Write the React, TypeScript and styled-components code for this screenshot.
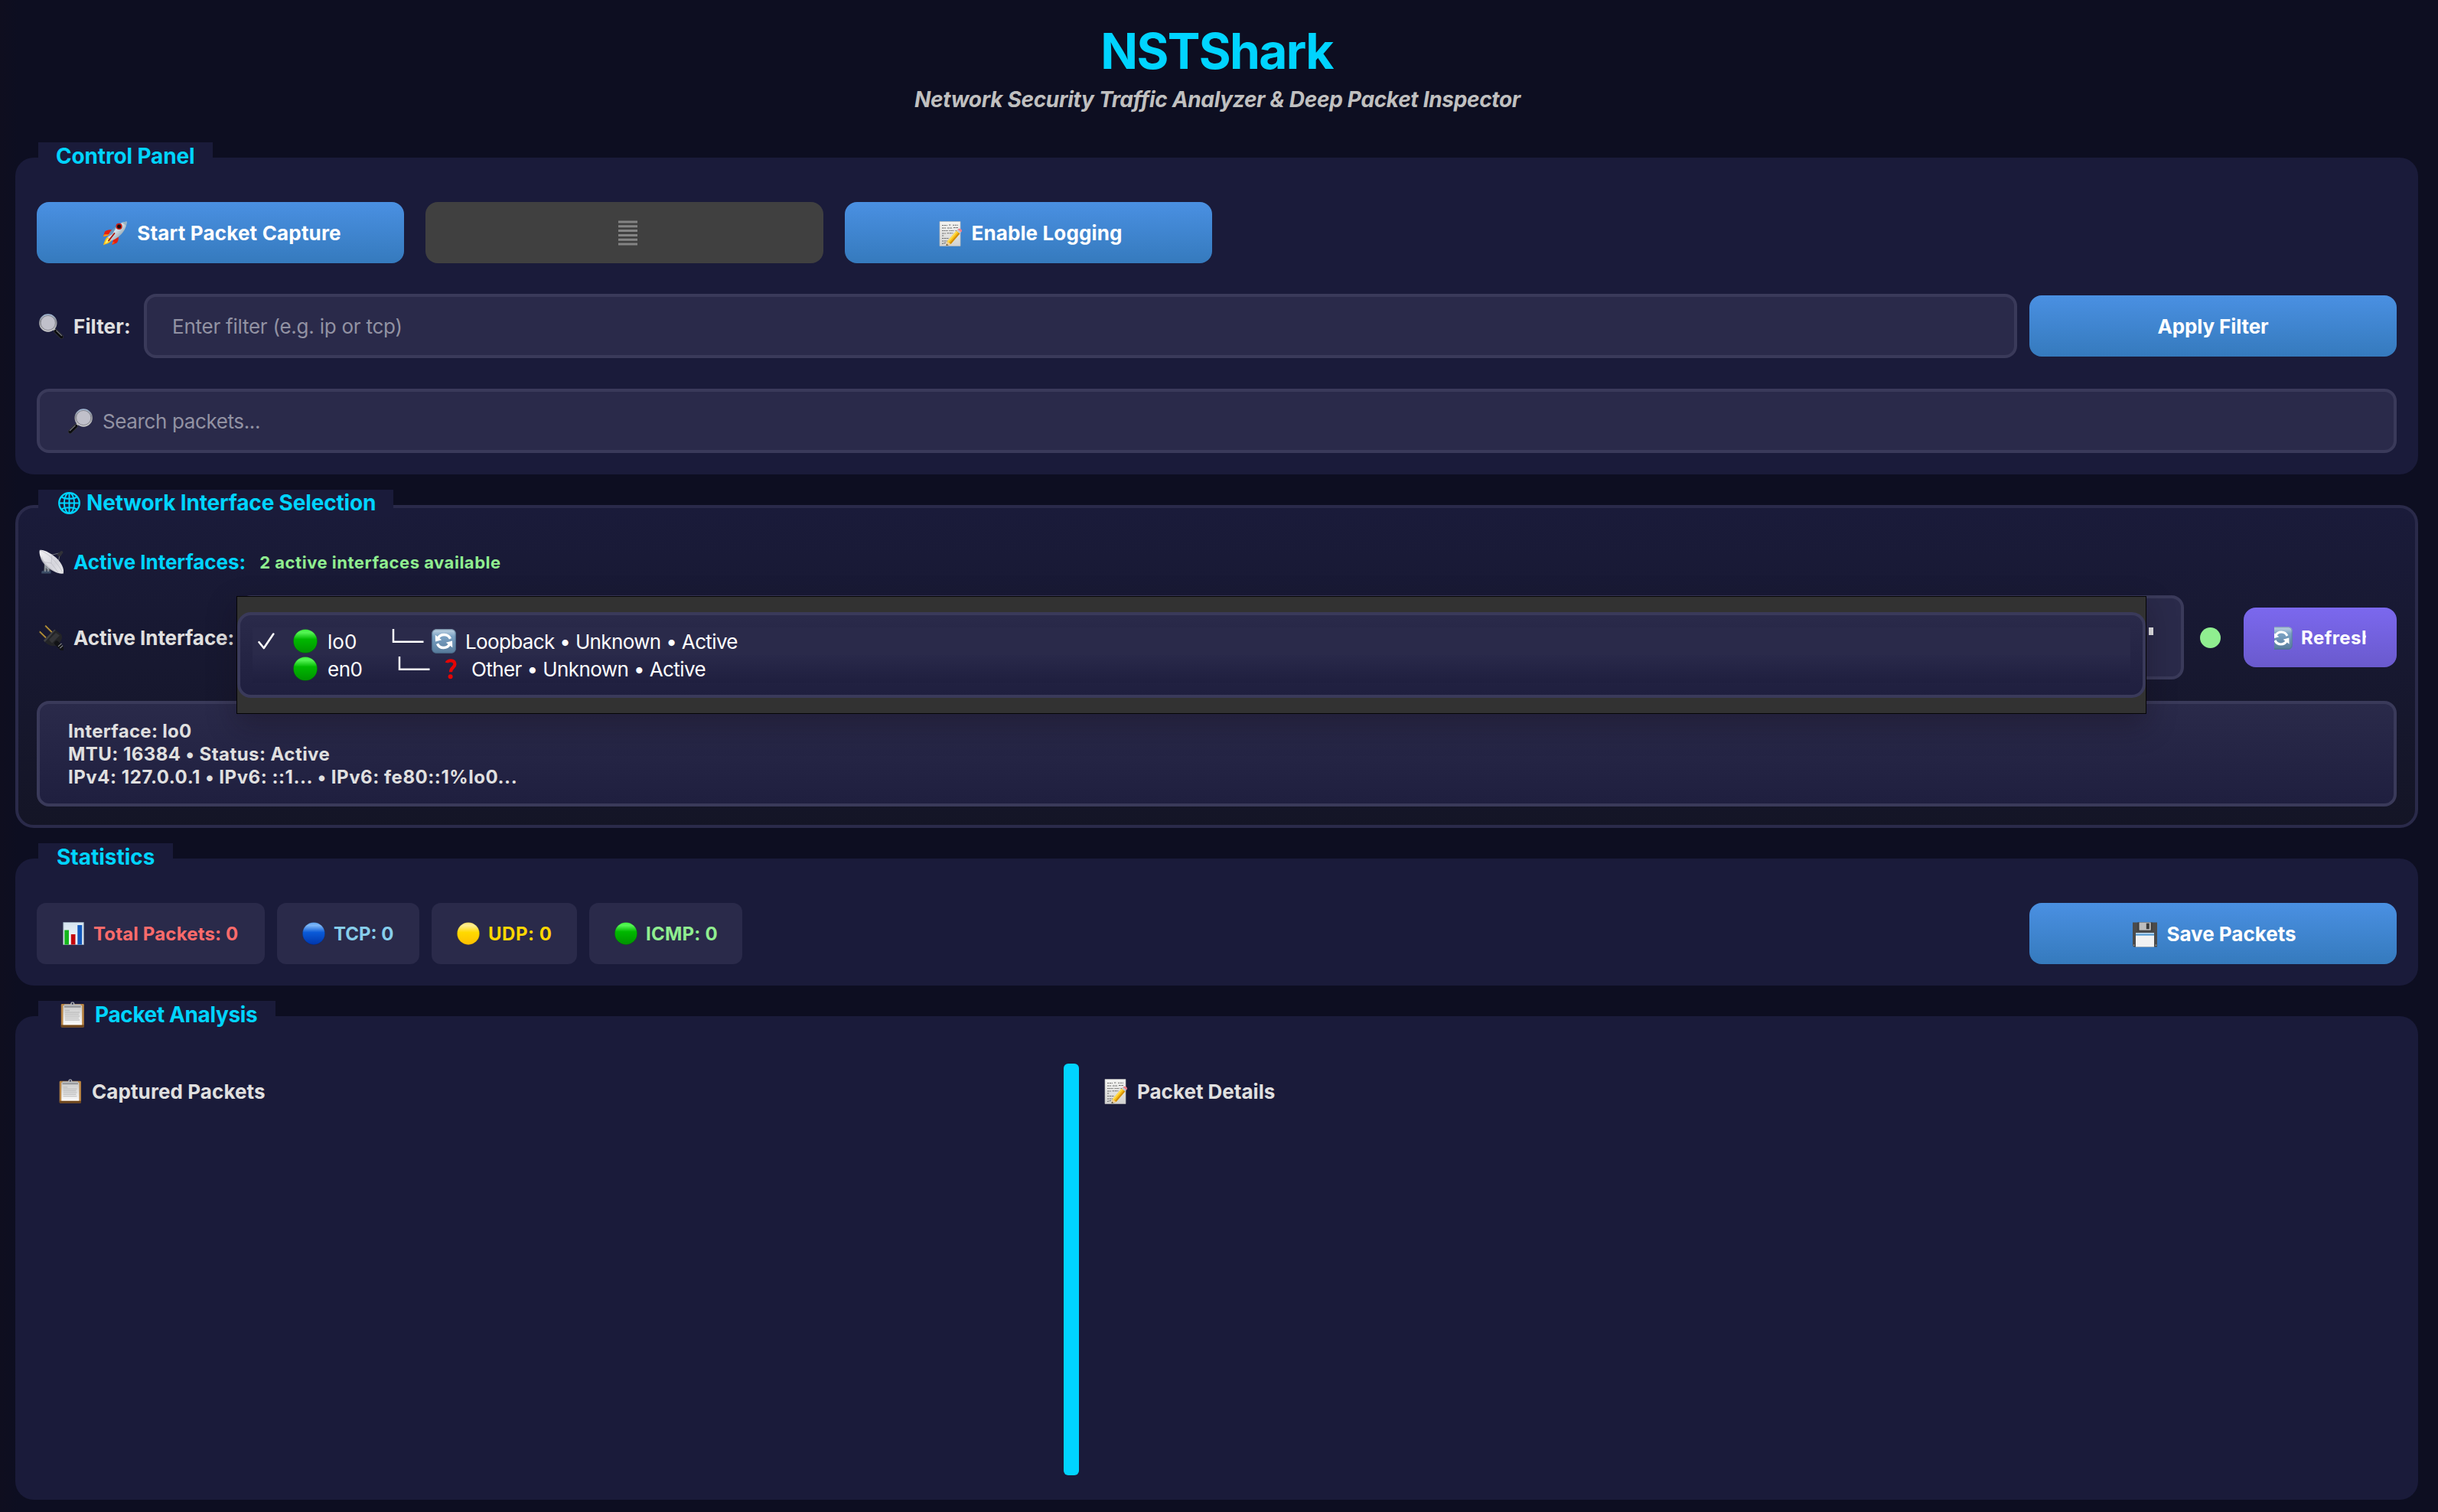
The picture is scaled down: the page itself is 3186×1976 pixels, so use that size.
import React from 'react';
import styled, { createGlobalStyle } from 'styled-components';

const color = {
  page: '#0d0e21',
  panel: '#1a1b3a',
  field: '#2a2a4a',
  line: '#3a3a5a',
  accent: '#00d4ff',
  text: '#e0e0e0',
  muted: '#9292a3',
  ok: '#90ee90',
};

const GlobalStyle = createGlobalStyle`
  *, *::before, *::after { box-sizing: border-box; }
  html, body { margin: 0; background: ${color.page}; }
  body { font-family: Inter, "Open Sans", sans-serif; color: ${color.text}; }
  svg { display: block; flex: none; }
`;

const Page = styled.main`
  width: 3186px;
  height: 1976px;
  padding: 0 26px 16px 20px;
  display: flex;
  flex-direction: column;
  gap: 40px;
  overflow: hidden;
  background: linear-gradient(90deg, #0f0e1f 0, ${color.page} 24px);
`;

const Header = styled.header`
  height: 166px;
  padding-top: 32px;
  display: flex;
  flex-direction: column;
  align-items: center;
`;

const Title = styled.h1`
  margin: 0;
  font-size: 64px;
  line-height: 70px;
  font-weight: 700;
  letter-spacing: -1.62px;
  color: ${color.accent};
`;

const Subtitle = styled.p`
  margin: 12px 0 0 2px;
  font-size: 28px;
  line-height: 32px;
  font-weight: 700;
  font-style: italic;
  letter-spacing: -0.32px;
  color: #c0c0c0;
`;

const Panel = styled.section<{ $outlined?: boolean; $grow?: boolean }>`
  display: flex;
  flex-direction: column;
  border-radius: 24px;
  flex: ${p => (p.$grow ? '1 1 0' : 'none')};
  padding: ${p => (p.$outlined ? '0 24px 24px' : p.$grow ? '0 28px 32px' : '0 28px 28px')};
  border: ${p => (p.$outlined ? '4px solid #2a2a4a' : 'none')};
  background: ${p => (p.$outlined ? 'linear-gradient(180deg, #1a1b3a, #141526)' : color.panel)};
  background-origin: border-box;
`;

const PanelTab = styled.h2<{ $width: number; $lift?: number; $inset?: number; $gap?: number; $track?: number }>`
  margin: -${p => p.$lift ?? 20}px 0 0 2px;
  width: ${p => p.$width}px;
  height: 36px;
  padding-left: ${p => p.$inset ?? 24}px;
  padding-bottom: ${p => (p.$gap === 8 ? 2 : 0)}px;
  display: flex;
  align-items: center;
  gap: ${p => p.$gap ?? 0}px;
  background: ${color.panel};
  color: ${color.accent};
  font-size: 28px;
  line-height: 32px;
  font-weight: 700;
  letter-spacing: ${p => p.$track ?? 0}px;
  white-space: nowrap;
`;

const PanelBody = styled.div<{ $gap: number; $top?: number }>`
  display: flex;
  flex-direction: column;
  flex: 1;
  margin-top: ${p => p.$top ?? 42}px;
  gap: ${p => p.$gap}px;
`;

const Row = styled.div<{ $gap?: number }>`
  display: flex;
  align-items: center;
  gap: ${p => p.$gap ?? 0}px;
`;

const Text = styled.span<{ $track?: number; $size?: number; $color?: string; $weight?: number }>`
  padding-top: 2px;
  font-size: ${p => p.$size ?? 26}px;
  line-height: 32px;
  font-weight: ${p => p.$weight ?? 700};
  letter-spacing: ${p => p.$track ?? 0}px;
  color: ${p => p.$color ?? color.text};
  white-space: nowrap;
`;

const Button = styled.button<{ $width?: number; $nudge?: number; $gap?: number; $track?: number }>`
  width: ${p => p.$width ?? 480}px;
  height: 80px;
  flex: none;
  display: flex;
  align-items: center;
  justify-content: center;
  gap: ${p => p.$gap ?? 12}px;
  padding: 2px 0 0 ${p => p.$nudge ?? 0}px;
  border: 0;
  border-radius: 16px;
  color: #fff;
  font: 700 26px/32px Inter, sans-serif;
  letter-spacing: ${p => p.$track ?? 0}px;
  background: linear-gradient(180deg, #4a90e2, #357abd);
  &:disabled {
    padding-top: 0;
    color: #808080;
    background: #404040;
  }
`;

const RefreshButton = styled(Button)`
  height: 78px;
  margin-left: 30px;
  padding: 1px 40px 0;
  background: linear-gradient(180deg, #7b68ee, #6a5acd);
`;

const Clip = styled.span`
  display: flex;
  justify-content: flex-start;
  align-items: center;
  gap: 11px;
  width: 120px;
  overflow: hidden;
  font-size: 24px;
  letter-spacing: 0.44px;
  & > svg { margin-left: -6px; }
`;

const FilterGroup = styled(Row)`
  flex: 1;
`;

const FieldLabel = styled.label`
  width: 140px;
  padding-left: 3px;
  display: flex;
  align-items: center;
  gap: 13px;
`;

const Field = styled.div<{ $inset: number }>`
  flex: 1;
  height: 84px;
  min-height: 84px;
  padding-left: ${p => p.$inset}px;
  display: flex;
  align-items: center;
  gap: 13px;
  border: 4px solid ${color.line};
  border-radius: 16px;
  background: ${color.field};
`;

const Input = styled.input<{ $track: number }>`
  flex: 1;
  height: 40px;
  padding: 1px 0 0;
  border: 0;
  outline: 0;
  background: transparent;
  color: ${color.text};
  font: 400 26px/32px Inter, sans-serif;
  letter-spacing: ${p => p.$track}px;
  &::placeholder { color: ${color.muted}; opacity: 1; }
`;

const InterfaceHeading = styled(Row)`
  height: 32px;
  padding-left: 3px;
  gap: 13px;
  & > :last-child { margin-left: 5px; }
`;

const InterfaceRow = styled(Row)`
  height: 110px;
  padding-left: 3px;
`;

const InterfaceName = styled.label`
  width: 261px;
  display: flex;
  align-items: center;
  gap: 13px;
`;

const Select = styled.div`
  position: relative;
  width: 2542px;
  height: 110px;
  flex: none;
  display: flex;
  justify-content: flex-end;
  align-items: flex-start;
  padding: 38px 36px 0 0;
  border: 4px solid ${color.line};
  border-radius: 16px;
  background: ${color.field};
`;

const SelectMark = styled.i`
  width: 6px;
  height: 10px;
  background: #e8e8ea;
`;

const Popup = styled.div`
  position: absolute;
  left: -7px;
  top: -3px;
  width: 2496px;
  height: 154px;
  padding: 20px 0;
  border: 1px solid #050505;
  background: #323232;
  box-shadow: 0 14px 34px rgba(20, 12, 24, 0.35);
`;

const PopupFrame = styled.div`
  height: 112px;
  padding: 16px;
  border: 4px solid ${color.line};
  border-radius: 18px;
  background: linear-gradient(180deg, #2a2a4a, #1f1f3f);
`;

const Option = styled.div<{ $last?: boolean }>`
  height: 36px;
  display: flex;
  align-items: center;
  background: ${p => (p.$last ? 'linear-gradient(180deg, #29294a, #1f1f3f)' : '#2a2a4a')};
`;

const CheckSlot = styled.span`
  width: 53px;
  padding-left: 7px;
`;

const OptionName = styled.span<{ $width: number }>`
  width: ${p => p.$width}px;
  margin-left: 13px;
  display: flex;
`;

const OptionDetail = styled.span`
  display: flex;
  align-items: center;
  & > :nth-child(2) { margin: 0 12px 0 10px; }
`;

const StatusDot = styled.i`
  width: 27px;
  height: 27px;
  margin-left: 21px;
  border-radius: 50%;
  background: ${color.ok};
`;

const DetailsBox = styled.div`
  height: 138px;
  display: flex;
  flex-direction: column;
  justify-content: center;
  padding: 1px 0 0 37px;
  border: 4px solid ${color.line};
  border-radius: 16px;
  background: linear-gradient(180deg, #2a2a4a, #1f1f3f);
  & > span {
    padding-top: 0;
    line-height: 30px;
  }
`;

const StatsRow = styled(Row)`
  justify-content: space-between;
`;

const Chip = styled.div<{ $width: number }>`
  width: ${p => p.$width}px;
  height: 80px;
  padding-left: 33px;
  display: flex;
  align-items: center;
  gap: 11px;
  border-radius: 12px;
  background: ${color.field};
`;

const Split = styled.div`
  flex: 1;
  display: flex;
`;

const Pane = styled.div<{ $width?: number; $inset: number; $gap: number }>`
  ${p => (p.$width ? `width: ${p.$width}px;` : 'flex: 1;')}
  padding: 20px 0 0 ${p => p.$inset}px;
  display: flex;
  align-items: flex-start;
  gap: ${p => p.$gap}px;
  & > span { padding-top: 1px; }
`;

const Splitter = styled.div`
  width: 20px;
  border-radius: 6px;
  background: ${color.accent};
`;

const HiddenDefs = styled.svg`
  position: absolute;
`;

/* Gradients shared by the pictograms. */
const Defs = () => (
  <HiddenDefs width="0" height="0">
    <defs>
      <linearGradient id="ballGreen" x1="0" y1="0" x2="0" y2="1">
        <stop offset="0" stopColor="#3ff03f" /><stop offset=".14" stopColor="#55f555" /><stop offset=".42" stopColor="#00b800" /><stop offset="1" stopColor="#009200" />
      </linearGradient>
      <linearGradient id="ballBlue" x1="0" y1="0" x2="0" y2="1">
        <stop offset="0" stopColor="#5fa4f2" /><stop offset=".14" stopColor="#7db6f7" /><stop offset=".45" stopColor="#0a5ad8" /><stop offset="1" stopColor="#0036ac" />
      </linearGradient>
      <linearGradient id="ballYellow" x1="0" y1="0" x2="0" y2="1">
        <stop offset="0" stopColor="#ffe36a" /><stop offset=".14" stopColor="#ffee93" /><stop offset=".45" stopColor="#ffd900" /><stop offset="1" stopColor="#fdbf00" />
      </linearGradient>
      <linearGradient id="tile" x1="0" y1="0" x2="0" y2="1">
        <stop offset="0" stopColor="#c3d7e6" /><stop offset=".16" stopColor="#9dbad3" /><stop offset=".3" stopColor="#7ba2c4" /><stop offset="1" stopColor="#577b9b" />
      </linearGradient>
      <linearGradient id="paper" x1="0" y1="0" x2="0" y2="1">
        <stop offset="0" stopColor="#f4f4f2" /><stop offset="1" stopColor="#d2d2d0" />
      </linearGradient>
      <linearGradient id="sheet" x1="0" y1="0" x2="0" y2="1">
        <stop offset="0" stopColor="#c9c9c9" /><stop offset="1" stopColor="#fafafa" />
      </linearGradient>
      <linearGradient id="hull" x1="0" y1="0" x2="1" y2="1">
        <stop offset="0" stopColor="#2f7cc0" /><stop offset=".45" stopColor="#d6e3ea" /><stop offset="1" stopColor="#5b7384" />
      </linearGradient>
      <linearGradient id="dish" x1="0" y1="0" x2="1" y2="1">
        <stop offset="0" stopColor="#f2f2f5" /><stop offset=".6" stopColor="#d5d5dc" /><stop offset="1" stopColor="#e9e9ec" />
      </linearGradient>
      <linearGradient id="rim" x1="0" y1="0" x2="0" y2="1">
        <stop offset="0" stopColor="#a3b9d4" /><stop offset=".4" stopColor="#8b8d93" /><stop offset="1" stopColor="#cfcfcf" />
      </linearGradient>
      <linearGradient id="chartBg" x1="0" y1="0" x2="0" y2="1">
        <stop offset="0" stopColor="#d5e4f0" /><stop offset="1" stopColor="#f6f9fb" />
      </linearGradient>
    </defs>
  </HiddenDefs>
);

const Rocket = () => (
  <svg width="32" height="32" viewBox="0 0 32 32">
    <path d="M12 11.5C8.500 10.800 4.500 12.200 3 13.500L0.800 20.300 9 18.500z" fill="#e5200f" />
    <path d="M2 17.500L0.800 20.300 7 19 9.500 17.200z" fill="#ff9b17" />
    <path d="M20.500 19.500C21.500 23 20 27 18.500 28.500L12.500 31 14 24z" fill="#e5200f" />
    <path d="M16 28l-3.500 3 0.800-4z" fill="#f9591b" />
    <path d="M6.500 20.500C3.800 22.500 2 27.500 1 31.200 4.500 30.300 9.500 28.600 11.500 25.500z" fill="#ffbd1a" />
    <path d="M6.800 22.500C5 24 4 27 3.200 29.500 6 28.300 8.500 27 9.600 25.200z" fill="#fff36a" />
    <path d="M6.500 20.800C10 12.500 18 2.500 31.600 0.600 31.500 13 21 22.500 11.300 25.800z" fill="url(#hull)" />
    <path d="M6.500 20.800C10 13 15 7 20 4L13 17z" fill="#2d6ea8" opacity=".6" />
    <path d="M25.500 2.200C27.500 1.200 29.500 0.800 31.600 0.600 31.500 2.800 31.200 4.800 30.500 6.800 29.500 4.500 27.500 2.800 25.500 2.200z" fill="#9db3bf" />
    <circle cx="21.600" cy="6.900" r="4.100" fill="#c81d14" />
    <circle cx="21.600" cy="6.900" r="2.500" fill="#160d14" />
    <path d="M8 25.500L15.500 16" stroke="#a8140c" strokeWidth="1.800" strokeLinecap="round" />
  </svg>
);

const Memo = () => (
  <svg width="32" height="33" viewBox="0 0 32 33">
    <path d="M1 0.500h27v32H1z" fill="url(#paper)" stroke="#b9b9b9" strokeWidth=".7" />
    <g stroke="#6d6d6d" strokeWidth="1.100" fill="none">
      <path d="M4 5.500h7m2-.500h3m2 .300h7" strokeDasharray="2.200 .7" />
      <path d="M4 9h5m2 0h6m2-.500h6" strokeDasharray="2.600 .7" />
      <path d="M4 12.500h8m1.500 0h6m2 0h3" strokeDasharray="1.800 .6" />
      <path d="M4 16h5m1.500-.300h8" strokeDasharray="2.800 .6" />
      <path d="M4 19h2.500M4 22.500h9M4 26h7M4 29.500l5-1.200" strokeDasharray="2.200 .6" />
    </g>
    <path d="M10.800 28.500L9.600 32 13.600 30.900z" fill="#333" />
    <path d="M23 12.500L27.400 16.300 15.500 30 9.600 32 10.800 26.500z" fill="#f7bd16" />
    <path d="M23 12.500L24.400 13.700 12.300 27.800 10.800 26.500z" fill="#ffdc50" />
    <path d="M26 15.100L27.400 16.300 15.500 30 14 28.800z" fill="#d18c08" />
    <path d="M10.800 26.500L15.500 30 9.600 32z" fill="#f0cf98" />
    <path d="M9.600 32l.5-2.200 1.700 1.400z" fill="#2b2b2b" />
    <path d="M23 12.500L24.500 10.800 28.900 14.600 27.400 16.300z" fill="#c3c8cc" />
    <path d="M24.500 10.800C26 9.300 28.200 9.800 29.300 10.900 30.400 12 30.400 13.300 28.900 14.600z" fill="#f0808a" />
  </svg>
);

const Magnifier = ({ mirrored }: { mirrored?: boolean }) => (
  <svg width="32" height="33" viewBox="0 0 32 33">
    <g transform={mirrored ? 'translate(32 0) scale(-1 1)' : undefined}>
      <path d="M19 19.500L23 23.500" stroke="#c9c9c9" strokeWidth="2.800" />
      <path d="M22 23L29.300 30.200" stroke="#3b3d42" strokeWidth="5.400" strokeLinecap="round" />
      <path d="M22 23L29.300 30.200" stroke="#0c0d0f" strokeWidth="4.200" strokeLinecap="round" />
      <path d="M22.800 22.200L29.500 28.700" stroke="#7d7f86" strokeWidth="1.100" strokeLinecap="round" />
      <circle cx="11.800" cy="12" r="10.900" fill="#c0c0ca" stroke="url(#rim)" strokeWidth="1.700" />
      <circle cx="11.800" cy="12" r="9.600" fill="none" stroke="#5f6068" strokeWidth=".8" opacity=".75" />
    </g>
  </svg>
);

const Satellite = () => (
  <svg width="32" height="32" viewBox="0 0 32 32">
    <path d="M7 18l7 6 1 6H6z" fill="#55585f" />
    <path d="M3.500 28.500C5 27 13.500 27 15.500 28.500V31.500H3.200z" fill="#3c4d66" />
    <path d="M8 17v12M12 21v8M8 22l5 5" stroke="#98a0a8" strokeWidth="1.400" />
    <path d="M13 8L26 5M24 22L27.500 5" stroke="#6f7178" strokeWidth="1" />
    <path d="M23.500 6.500L28.500 2.200C30 1.500 31.500 2.500 31.300 4.200L28 9.300C26 9.500 24 8.500 23.500 6.500z" fill="#303138" />
    <path d="M0.800 1.200C4-1 17 5 25 13.500 31 20 33 27 31.800 31.500 26 32.500 17 28.500 10 22 3 15.500-.5 6 .8 1.200z" fill="url(#dish)" />
    <path d="M0.800 1.200C8 3 21 12 31.800 31.500M17 7.500L16 18M6 16.500L16 18 25 30" stroke="#b3b3bc" strokeWidth=".6" fill="none" />
    <path d="M3.500 9C7 19 17 28 29 31.800 18 30 6 22 2 12z" fill="#b1b1ba" opacity=".55" />
  </svg>
);

const Plug = () => (
  <svg width="32" height="33" viewBox="0 0 32 33">
    <path d="M0.800 8.500L9 16.500M8.200 0.800L17 9.500" stroke="#8a6c24" strokeWidth="2.200" />
    <path d="M0.800 8.200L9 16.200M8.400 0.700L17 9.200" stroke="#d8b252" strokeWidth=".9" />
    <path d="M20.300 5.600L22.500 7.500 7.800 22.300 5.800 20z" fill="#3f4043" />
    <path d="M21.500 6.500L29 12C31 15 29.800 19 27.500 22L22 27C17.500 27.800 12.500 27 7.800 22.300z" fill="#232427" />
    <path d="M13 19l9-9 5 3.500-10 10z" fill="#3d3f42" opacity=".7" />
    <path d="M23 23.500L30.500 31" stroke="#121316" strokeWidth="6" strokeLinecap="round" />
    <path d="M25 27.800l4.500-4M27.300 30.200l3.800-3.600" stroke="#8b8d92" strokeWidth="1.100" />
  </svg>
);

const Ball = ({ fill, size = 30 }: { fill: string; size?: number }) => (
  <svg width={size} height={size} viewBox="0 0 32 32">
    <circle cx="16" cy="16" r="15.600" fill={`url(#${fill})`} stroke="#000" strokeOpacity=".2" strokeWidth=".7" />
  </svg>
);

const Cycle = ({ size = 32 }: { size?: number }) => (
  <svg width={size} height={size} viewBox="0 0 32 32">
    <rect x=".3" y=".3" width="31.400" height="31.400" rx="5.500" fill="url(#tile)" />
    <rect x=".9" y=".9" width="30.200" height="30.200" rx="5" fill="none" stroke="#466985" strokeWidth="1" opacity=".6" />
    <g fill="none" stroke="#fff" strokeWidth="3.400">
      <path d="M8.200 12.500A9 9 0 0 1 24.500 12.800" />
      <path d="M23.800 19.500A9 9 0 0 1 7.500 19.200" />
    </g>
    <path d="M4.800 7.800L5 16.500 13.200 14.200z M27.300 24.200L27 15.500 18.800 17.800z" fill="#fff" />
  </svg>
);

const Question = () => (
  <svg width="32" height="32" viewBox="0 0 32 32">
    <path d="M11.800 8.200C12.500 4.500 22.200 3.900 22.400 10 22.500 14.300 17.200 14 17 20.200" fill="none" stroke="#e60505" strokeWidth="4.200" />
    <circle cx="16.600" cy="26.300" r="3" fill="#e60505" />
  </svg>
);

const Globe = () => (
  <svg width="29" height="29" viewBox="0 0 29 29" fill="none" stroke={color.accent} strokeWidth="2">
    <circle cx="14.500" cy="14.500" r="13.300" strokeWidth="2.300" />
    <ellipse cx="14.500" cy="14.500" rx="6.600" ry="13.300" />
    <path d="M14.500 1v27M1 14.500h27M4 6.300C9.500 9.600 19.500 9.600 25 6.300M4 22.700C9.500 19.400 19.500 19.400 25 22.700" />
  </svg>
);

const Chart = () => (
  <svg width="30" height="30" viewBox="0 0 30 30">
    <path d="M1.800 .4h26.500v29.200H1.800z" fill="url(#chartBg)" stroke="#93a5b6" strokeWidth=".9" />
    <path d="M3.300 10.500h5.700v19H3.300z" fill="#14b51c" />
    <path d="M11.800 16h5.700v13.500h-5.700z" fill="#c3070c" />
    <path d="M20.300 4h5.900v25.500h-5.900z" fill="#1259bd" />
  </svg>
);

const Clipboard = ({ size = 32 }: { size?: number }) => (
  <svg width={size} height={size} viewBox="0 0 32 34">
    <rect x=".8" y="3" width="30" height="30.500" rx="1.200" fill="#b98544" />
    <path d="M.8 30.500h30v2.200q0 .8-.8.8H1.600q-.8 0-.8-.8z" fill="#6e461c" />
    <path d="M3.500 5h24.600v25.400H3.500z" fill="url(#sheet)" />
    <path d="M6 11.500h6M6 14h19M6 16.500h18M6 19h19M6 21.500h18M6 24h19" stroke="#b5b5b5" strokeWidth="1.400" opacity=".7" />
    <path d="M5 3.500h8C13.500 1 14 .5 15.800 .5S18 1 18.600 3.500h8v4H5z" fill="#b4b6b9" />
    <path d="M5 6.200h21.600v1.300H5z" fill="#85878b" />
    <circle cx="15.800" cy="2.600" r="1.100" fill={color.panel} />
  </svg>
);

const Floppy = () => (
  <svg width="32" height="33" viewBox="0 0 32 33">
    <path d="M0 .5h32v32H1.500L0 31z" fill="#4b4b4b" />
    <path d="M6.500 .5h19v11h-19z" fill="#3c3c3c" />
    <path d="M8.500 .5h15.200v10.200H8.500z" fill="#bdbdbd" />
    <path d="M17.800 1.600h4v7.600h-4z" fill="#3b3b3b" />
    <path d="M4 14h24v18.500H4z" fill="#f2f2f2" />
    <path d="M4 14h24v1.600H4z" fill="#b7d6ee" />
    <path d="M4 15.600h24v2H4z" fill="#4a94cf" />
    <path d="M.8 29.500h1.600v1.600H.8zM29.600 29.500h1.600v1.600h-1.600z" fill="#9a9a9a" />
  </svg>
);

const Stack = () => (
  <svg width="25" height="33" viewBox="0 0 25 33" stroke="#848484" strokeWidth="3">
    <path d="M0 2h25M0 7.800h25M0 13.600h25M0 19.400h25M0 25.200h25M0 31h25" />
  </svg>
);

const Check = () => (
  <svg width="22" height="22" viewBox="0 0 22 22" fill="none" stroke="#fff" strokeWidth="2.600" strokeLinecap="round" strokeLinejoin="round">
    <path d="M1.500 12.200L7.800 20 20.300 1.500" />
  </svg>
);

const Elbow = () => (
  <svg width="42" height="36" viewBox="0 0 42 36" fill="none" stroke="#fff" strokeWidth="2.500">
    <path d="M2 2v16.700h39.500" />
  </svg>
);

const options = [
  { name: 'lo0', track: 0, width: 84, icon: <Cycle />, detail: 'Loopback • Unknown • Active', detailTrack: -0.64, checked: true },
  { name: 'en0', track: -0.5, width: 92, icon: <Question />, detail: 'Other • Unknown • Active', detailTrack: -0.59, checked: false },
];

const stats = [
  { label: 'Total Packets: 0', width: 298, track: 0.16, color: '#ff6b6b', icon: <Chart /> },
  { label: 'TCP: 0', width: 186, track: 0, color: '#87ceeb', icon: <Ball fill="ballBlue" /> },
  { label: 'UDP: 0', width: 190, track: 0.5, color: '#ffd700', icon: <Ball fill="ballYellow" /> },
  { label: 'ICMP: 0', width: 200, track: 0.23, color: color.ok, icon: <Ball fill="ballGreen" /> },
];

export default function App() {
  return (
    <>
      <GlobalStyle />
      <Defs />
      <Page>
        <Header>
          <Title>NSTShark</Title>
          <Subtitle>Network Security Traffic Analyzer &amp; Deep Packet Inspector</Subtitle>
        </Header>

        <Panel>
          <PanelTab $width={228} $inset={23} $track={-0.15}>Control Panel</PanelTab>
          <PanelBody $gap={40}>
            <Row $gap={28}>
              <Button $nudge={4} $gap={13} $track={0.18}><Rocket />Start Packet Capture</Button>
              <Button $width={520} $nudge={9} disabled aria-label="Stop"><Stack /></Button>
              <Button $nudge={5} $gap={11} $track={0.12}><Memo />Enable Logging</Button>
            </Row>
            <Row $gap={16}>
              <FilterGroup>
                <FieldLabel><Magnifier /><Text $track={0.15}>Filter:</Text></FieldLabel>
                <Field $inset={33}>
                  <Input $track={-0.24} placeholder="Enter filter (e.g. ip or tcp)" />
                </Field>
              </FilterGroup>
              <Button $track={-0.1}>Apply Filter</Button>
            </Row>
            <Field $inset={37}>
              <Magnifier mirrored />
              <Input $track={-0.38} placeholder="Search packets..." />
            </Field>
          </PanelBody>
        </Panel>

        <Panel $outlined>
          <PanelTab $width={464} $lift={24} $inset={26} $gap={8} $track={-0.17}><Globe />Network Interface Selection</PanelTab>
          <PanelBody $gap={28}>
            <InterfaceHeading>
              <Satellite />
              <Text $track={-0.03} $color={color.accent}>Active Interfaces:</Text>
              <Text $size={22} $track={0.52} $color={color.ok}>2 active interfaces available</Text>
            </InterfaceHeading>
            <InterfaceRow>
              <InterfaceName><Plug /><Text $track={-0.06}>Active Interface:</Text></InterfaceName>
              <Select>
                <SelectMark />
                <Popup>
                  <PopupFrame>
                    {options.map((o, i) => (
                      <Option key={o.name} $last={i === options.length - 1}>
                        <CheckSlot>{o.checked && <Check />}</CheckSlot>
                        <Ball fill="ballGreen" size={32} />
                        <OptionName $width={o.width}><Text $weight={400} $color="#fff" $track={o.track}>{o.name}</Text></OptionName>
                        <OptionDetail>
                          <Elbow />
                          {o.icon}
                          <Text $weight={400} $color="#fff" $track={o.detailTrack}>{o.detail}</Text>
                        </OptionDetail>
                      </Option>
                    ))}
                  </PopupFrame>
                </Popup>
              </Select>
              <StatusDot />
              <RefreshButton $width={200}>
                <Clip><Cycle size={30} />Refresh</Clip>
              </RefreshButton>
            </InterfaceRow>
            <DetailsBox>
              <Text $size={24} $track={0.3}>Interface: lo0</Text>
              <Text $size={24} $track={0.45}>MTU: 16384 • Status: Active</Text>
              <Text $size={24} $track={0.54}>IPv4: 127.0.0.1 • IPv6: ::1... • IPv6: fe80::1%lo0...</Text>
            </DetailsBox>
          </PanelBody>
        </Panel>

        <Panel>
          <PanelTab $width={176} $inset={24}>Statistics</PanelTab>
          <PanelBody $gap={0}>
            <StatsRow>
              <Row $gap={16}>
                {stats.map(s => (
                  <Chip key={s.label} $width={s.width}>
                    {s.icon}
                    <Text $size={24} $track={s.track} $color={s.color}>{s.label}</Text>
                  </Chip>
                ))}
              </Row>
              <Button $nudge={4}><Floppy />Save Packets</Button>
            </StatsRow>
          </PanelBody>
        </Panel>

        <Panel $grow>
          <PanelTab $width={310} $inset={28} $gap={12} $track={-0.38}><Clipboard size={34} />Packet Analysis</PanelTab>
          <PanelBody $gap={0} $top={46}>
            <Split>
              <Pane $width={1342} $inset={28} $gap={12}>
                <Clipboard />
                <Text $track={0.09}>Captured Packets</Text>
              </Pane>
              <Splitter />
              <Pane $inset={33} $gap={11}>
                <Memo />
                <Text>Packet Details</Text>
              </Pane>
            </Split>
          </PanelBody>
        </Panel>
      </Page>
    </>
  );
}
